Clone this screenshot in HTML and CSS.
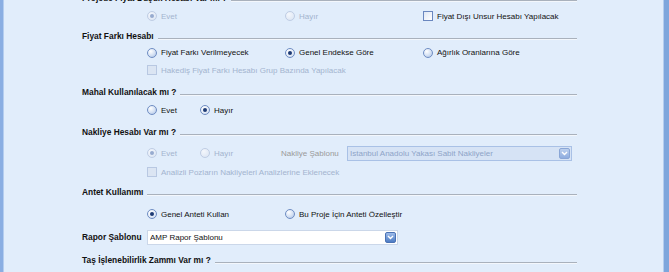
FILE: index.html
```html
<!DOCTYPE html>
<html lang="tr">
  <head>
    <meta charset="UTF-8" />
    <meta name="viewport" content="width=device-width, initial-scale=1.0" />
    <title>Proje Ayarları</title>
    <link rel="stylesheet" href="styles.css">
  </head>
  <body>
    <div class="window">
      <div class="form">
        <!-- Fiyat Düşük -->
        <section class="group group-tight">
          <div class="group-title"><span>Projede Fiyat Düşük Hesabı Var mı ?</span><i class="rule"></i></div>
          <div class="row">
            <label class="opt col-a disabled"><span class="radio checked"></span>Evet</label>
            <label class="opt col-a disabled"><span class="radio"></span>Hayır</label>
            <label class="opt"><span class="check"></span>Fiyat Dışı Unsur Hesabı Yapılacak</label>
          </div>
        </section>

        <!-- Fiyat Farkı -->
        <section class="group">
          <div class="group-title"><span>Fiyat Farkı Hesabı</span><i class="rule"></i></div>
          <div class="row row-short">
            <label class="opt col-a"><span class="radio"></span>Fiyat Farkı Verilmeyecek</label>
            <label class="opt col-a"><span class="radio checked"></span>Genel Endekse Göre</label>
            <label class="opt"><span class="radio"></span>Ağırlık Oranlarına Göre</label>
          </div>
          <div class="row">
            <label class="opt disabled"><span class="check"></span>Hakediş Fiyat Farkı Hesabı Grup Bazında Yapılacak</label>
          </div>
        </section>

        <!-- Mahal -->
        <section class="group">
          <div class="group-title"><span>Mahal Kullanılacak mı ?</span><i class="rule"></i></div>
          <div class="row">
            <label class="opt col-b"><span class="radio"></span>Evet</label>
            <label class="opt"><span class="radio checked"></span>Hayır</label>
          </div>
        </section>

        <!-- Nakliye -->
        <section class="group group-tight">
          <div class="group-title"><span>Nakliye Hesabı Var mı ?</span><i class="rule"></i></div>
          <div class="row row-select">
            <label class="opt col-b disabled"><span class="radio checked"></span>Evet</label>
            <label class="opt col-c disabled"><span class="radio"></span>Hayır</label>
            <span class="field-label disabled">Nakliye Şablonu</span>
            <div class="select select-wide is-disabled">
              <span class="select-text">Istanbul Anadolu Yakası Sabit Nakliyeler</span>
              <span class="select-btn">
                <svg width="7" height="5" viewBox="0 0 7 5"><path d="M1 1 L3.5 3.5 L6 1" fill="none" stroke="#fff" stroke-width="1.4"/></svg>
              </span>
            </div>
          </div>
          <div class="row">
            <label class="opt disabled"><span class="check"></span>Analizli Pozların Nakliyeleri Analizlerine Eklenecek</label>
          </div>
        </section>

        <!-- Antet -->
        <section class="group">
          <div class="group-title"><span>Antet Kullanımı</span><i class="rule"></i></div>
          <div class="row row-spaced">
            <label class="opt col-a"><span class="radio checked"></span>Genel Anteti Kullan</label>
            <label class="opt"><span class="radio"></span>Bu Proje İçin Anteti Özelleştir</label>
          </div>
        </section>

        <section class="group group-loose">
          <div class="row row-flush">
            <span class="field-label bold">Rapor Şablonu</span>
            <div class="select select-report">
              <span class="select-text">AMP Rapor Şablonu</span>
              <span class="select-btn">
                <svg width="7" height="5" viewBox="0 0 7 5"><path d="M1 1 L3.5 3.5 L6 1" fill="none" stroke="#fff" stroke-width="1.4"/></svg>
              </span>
            </div>
          </div>
        </section>

        <!-- Taş -->
        <section class="group">
          <div class="group-title"><span>Taş İşlenebilirlik Zammı Var mı ?</span><i class="rule"></i></div>
        </section>
      </div>
    </div>
  </body>
</html>
```

FILE: styles.css
```css
html, body {
  margin: 0;
  padding: 0;
}

body {
  font-family: 'Liberation Sans', Arial, sans-serif;
  font-size: 8px;
  color: #111;
  background: #e1edfb;
}

.window {
  box-sizing: border-box;
  width: 669px;
  height: 272px;
  overflow: hidden;
  background: #e1edfb;
  border-left: 3px solid #8aaee2;
  border-right: 5px solid #7ea6dc;
  box-shadow: inset 1px 0 0 #b4cdef, inset -1px 0 0 #b4cdef;
}

.form {
  width: 495px;
  margin-left: 79px;
  margin-top: -10px;
}

.group {
  margin-bottom: 5px;
}

.group-tight {
  margin-bottom: 3px;
}

.group-loose {
  margin-bottom: 6px;
}

.group-title {
  display: flex;
  align-items: center;
  height: 16px;
  margin-bottom: 1px;
  font-weight: bold;
  font-size: 8.4px;
}

.rule {
  flex: 1;
  height: 0;
  margin-left: 4px;
  margin-top: 5px;
  border-top: 1px solid #a9b1bc;
  border-bottom: 1px solid #f3f7fc;
}

.row {
  display: flex;
  align-items: center;
  height: 18px;
  margin-left: 65px;
}

.row-short {
  height: 17px;
  margin-top: -1px;
}

.row-select {
  height: 20px;
  margin-top: 3px;
}

.row-spaced {
  margin-top: 5px;
}

.row-flush {
  margin-left: 0;
}

.opt {
  display: flex;
  align-items: center;
  gap: 4px;
  white-space: nowrap;
}

.col-a {
  width: 138px;
}

.col-b {
  width: 53px;
}

.col-c {
  width: 81px;
}

.disabled {
  color: #a3b4cf;
}

.radio {
  position: relative;
  box-sizing: border-box;
  width: 10px;
  height: 10px;
  border-radius: 50%;
  border: 1px solid #6f8dc3;
  background: radial-gradient(circle at 35% 30%, #ffffff 0%, #d3e0f3 55%, #a7bde2 100%);
}

.radio.checked {
  background: radial-gradient(circle at 35% 30%, #ffffff 0%, #e3ebf7 60%, #b9cbe8 100%);
}

.radio.checked::after {
  content: "";
  position: absolute;
  left: 2px;
  top: 2px;
  width: 4px;
  height: 4px;
  border-radius: 50%;
  background: #1d3a74;
}

.disabled .radio {
  border-color: #bfcde4;
  background: radial-gradient(circle at 35% 30%, #f4f7fc 0%, #e1e9f5 70%, #d2ddef 100%);
}

.disabled .radio.checked::after {
  background: #97abcf;
}

.check {
  box-sizing: border-box;
  width: 10px;
  height: 10px;
  border: 1px solid #6a87bf;
  background: linear-gradient(135deg, #dfe7f3, #ffffff);
}

.disabled .check {
  border-color: #b8c8e2;
  background: #dbe5f3;
}

.field-label {
  white-space: nowrap;
}

.field-label.disabled {
  width: 66px;
  color: #9a9a9a;
}

.field-label.bold {
  width: 65px;
  font-weight: bold;
  font-size: 8.4px;
}

.select {
  box-sizing: border-box;
  display: flex;
  align-items: center;
  height: 15px;
  padding-left: 2px;
  background: #fff;
  border: 1px solid #cbd7e9;
}

.select-wide {
  width: 225px;
}

.select-report {
  width: 251px;
}

.select-text {
  flex: 1;
  white-space: nowrap;
  overflow: hidden;
}

.select-btn {
  box-sizing: border-box;
  display: flex;
  align-items: center;
  justify-content: center;
  width: 11px;
  height: 11px;
  margin-right: 1px;
  border-radius: 2px;
  border: 1px solid #4a72b4;
  background: linear-gradient(#9dbbea, #4d7cc4);
}

.select.is-disabled {
  background: #d6e3f5;
  border-color: #a9c1e6;
  color: #8ea3c8;
}

.select.is-disabled .select-btn {
  border-color: #8aa6d6;
  background: linear-gradient(#bcd0ee, #8faddf);
}
```
